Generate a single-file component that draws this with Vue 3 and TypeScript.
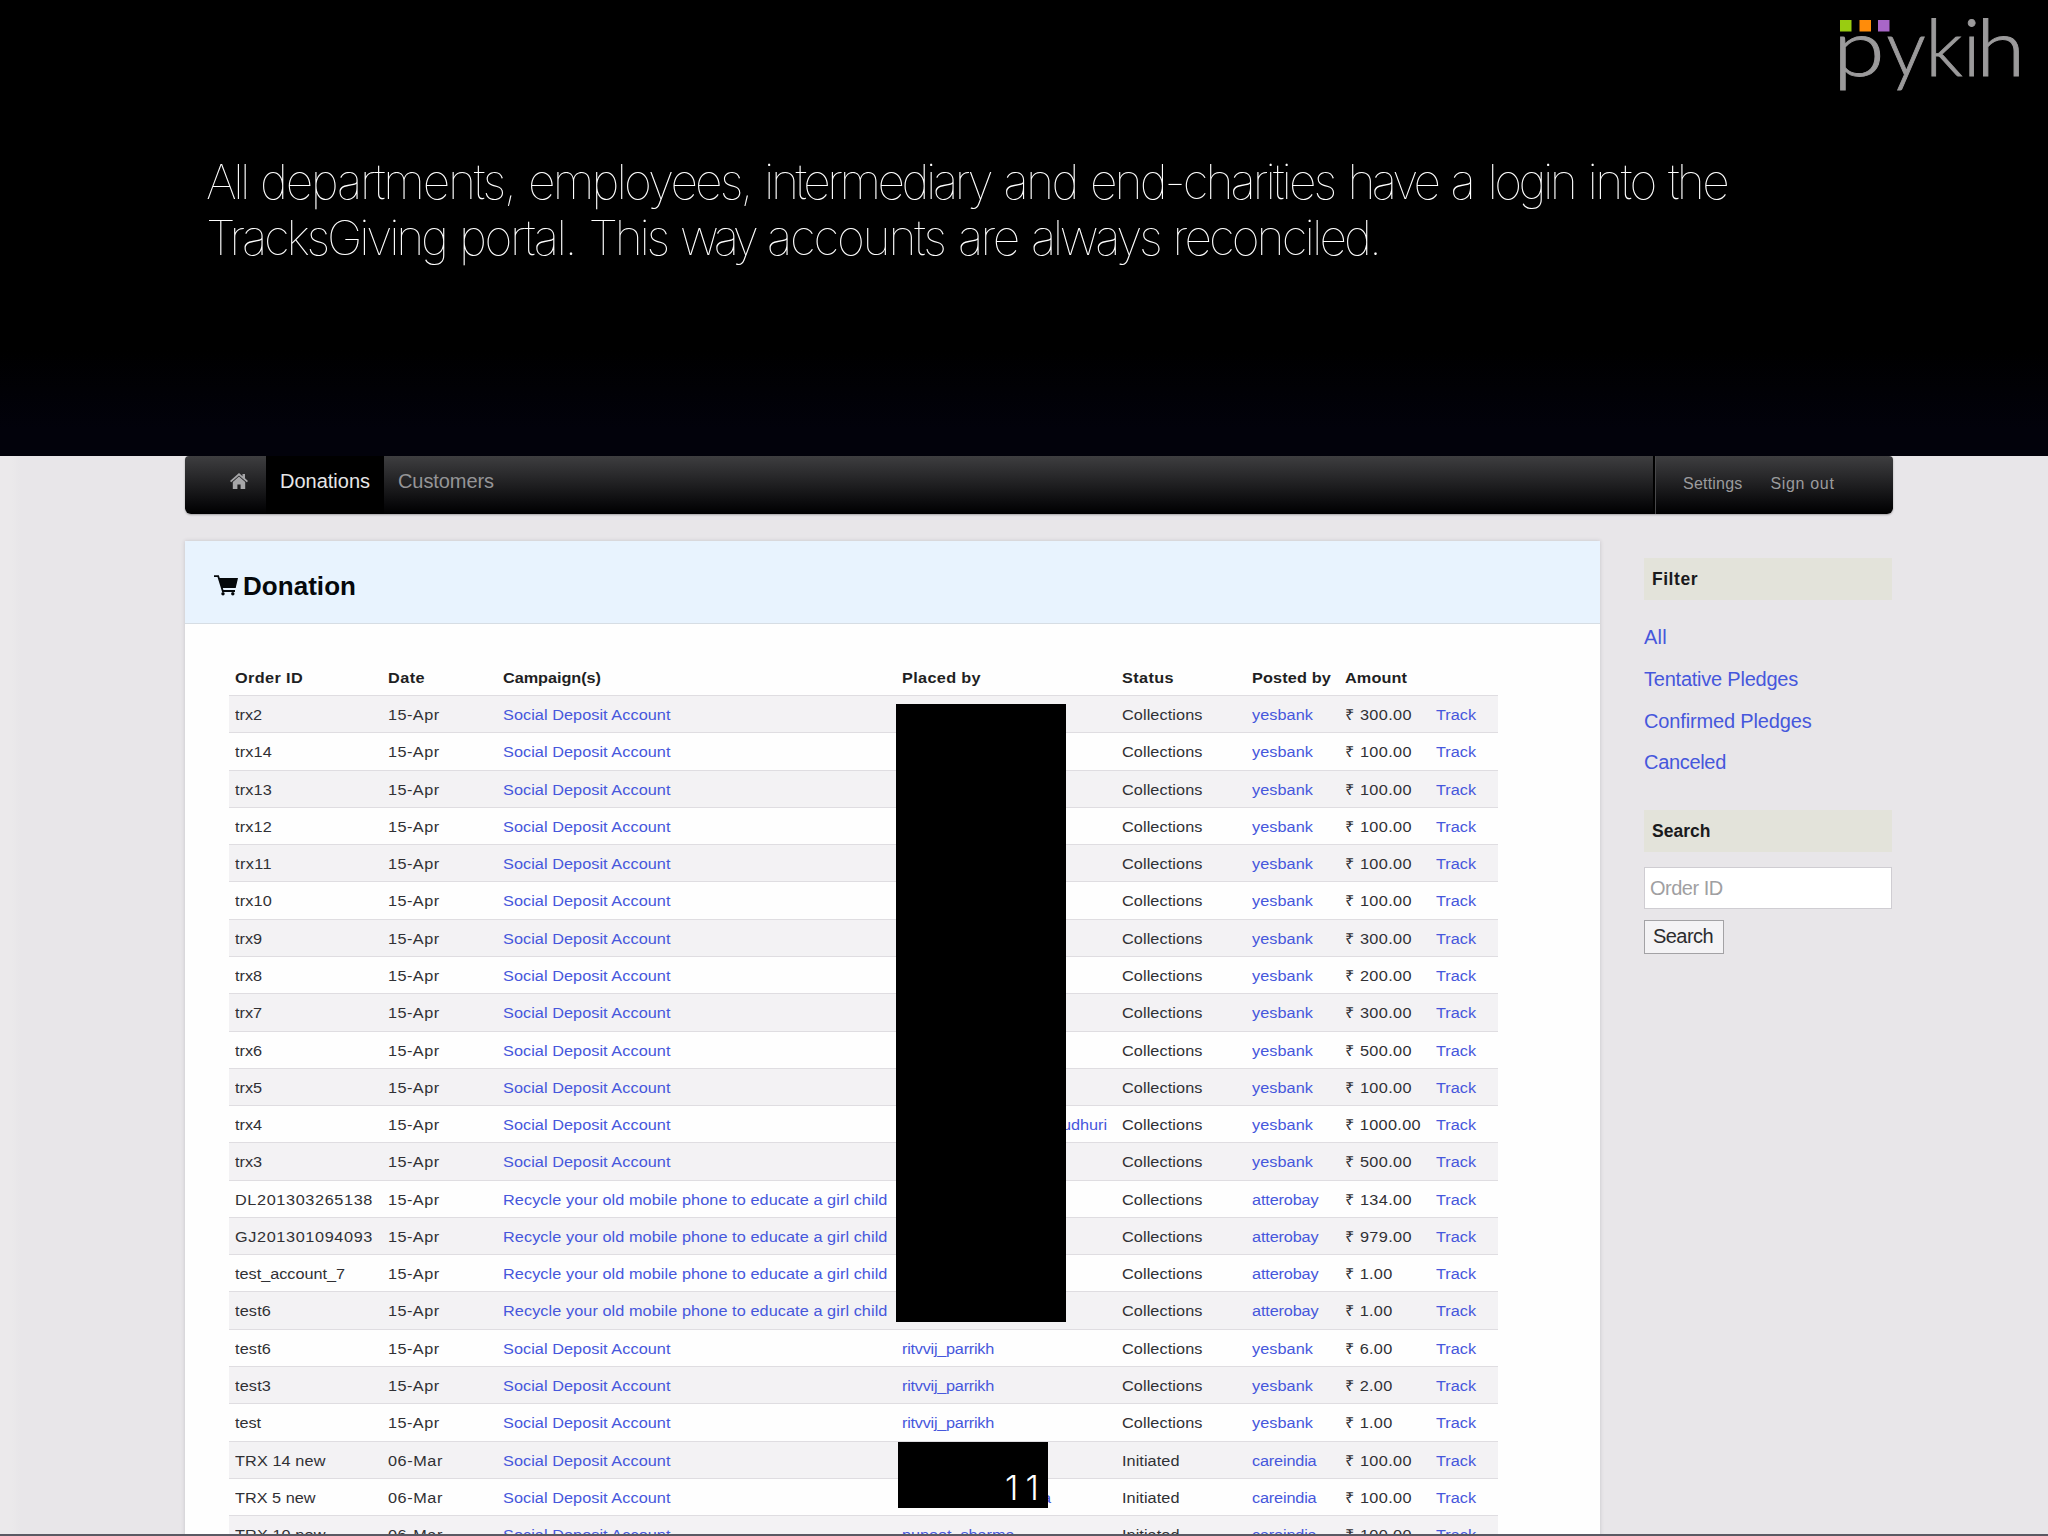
<script setup lang="ts">
import type { Directive } from 'vue'

interface Row {
  id: string
  date: string
  campaign: string
  placedBy: string
  status: string
  postedBy: string
  amount: string
}

// Adjusts tracking so that a label takes exactly the given width,
// allowing for a horizontal stretch set in CSS.
const vFit: Directive<HTMLElement, number | undefined> = {
  mounted(el, { value }) {
    const length = (el.textContent ?? '').trim().length
    if (!value || !length) return
    const natural = el.getBoundingClientRect().width
    const stretch = new DOMMatrix(getComputedStyle(el).transform).a
    el.style.letterSpacing = `${(value - natural) / length / stretch}px`
  },
}

const statement: [string, number][][] = [
  [
    ['All', 40.7], ['departments,', 254.7], ['employees,', 222.7], ['intermediary', 226.2], ['and', 73.2],
    ['end-charities', 244.2], ['have', 89.7], ['a', 23.7], ['login', 86.7], ['into', 67.2], ['the', 59],
  ],
  [
    ['TracksGiving', 239.7], ['portal.', 116.2], ['This', 78.2], ['way', 73.7], ['accounts', 177.7],
    ['are', 59.7], ['always', 128.2], ['reconciled.', 206.5],
  ],
]

const widths: Record<string, number> = {
  'Order ID': 68, Date: 37, 'Campaign(s)': 98, 'Placed by': 79, Status: 52, 'Posted by': 79, Amount: 62,
  trx2: 27, trx14: 37, trx13: 37, trx12: 37, trx11: 37, trx10: 37,
  trx9: 27, trx8: 27, trx7: 27, trx6: 27, trx5: 27, trx4: 27, trx3: 27,
  DL201303265138: 138, GJ201301094093: 138, test_account_7: 110,
  test6: 36, test3: 36, test: 26, 'TRX 14 new': 90.5, 'TRX 5 new': 80.5, 'TRX 10 new': 90.5,
  '15-Apr': 51.5, '06-Mar': 55,
  'Social Deposit Account': 167.5,
  'Recycle your old mobile phone to educate a girl child': 384.5,
  ritvvij_parrikh: 92, puneet_sharma: 112.5, udhuri: 45,
  Collections: 80.5, Initiated: 57.5, yesbank: 61, atterobay: 66.5, careindia: 64.5,
  '₹ 1000.00': 76, Track: 40,
}

function widthOf(text: string): number | undefined {
  if (widths[text]) return widths[text]
  if (text.startsWith('₹')) return text.length === 8 ? 67 : 47.5
  return undefined
}

const headers = ['Order ID', 'Date', 'Campaign(s)', 'Placed by', 'Status', 'Posted by', 'Amount']

const SDA = 'Social Deposit Account'
const RECYCLE = 'Recycle your old mobile phone to educate a girl child'

function row(
  id: string, amount: string, campaign = SDA, postedBy = 'yesbank',
  placedBy = '', date = '15-Apr', status = 'Collections',
): Row {
  return { id, date, campaign, placedBy, status, postedBy, amount: `₹ ${amount}` }
}

const rows: Row[] = [
  row('trx2', '300.00'),
  row('trx14', '100.00'),
  row('trx13', '100.00'),
  row('trx12', '100.00'),
  row('trx11', '100.00'),
  row('trx10', '100.00'),
  row('trx9', '300.00'),
  row('trx8', '200.00'),
  row('trx7', '300.00'),
  row('trx6', '500.00'),
  row('trx5', '100.00'),
  row('trx4', '1000.00', SDA, 'yesbank', 'udhuri'),
  row('trx3', '500.00'),
  row('DL201303265138', '134.00', RECYCLE, 'atterobay'),
  row('GJ201301094093', '979.00', RECYCLE, 'atterobay'),
  row('test_account_7', '1.00', RECYCLE, 'atterobay'),
  row('test6', '1.00', RECYCLE, 'atterobay'),
  row('test6', '6.00', SDA, 'yesbank', 'ritvvij_parrikh'),
  row('test3', '2.00', SDA, 'yesbank', 'ritvvij_parrikh'),
  row('test', '1.00', SDA, 'yesbank', 'ritvvij_parrikh'),
  row('TRX 14 new', '100.00', SDA, 'careindia', '', '06-Mar', 'Initiated'),
  row('TRX 5 new', '100.00', SDA, 'careindia', 'a', '06-Mar', 'Initiated'),
  row('TRX 10 new', '100.00', SDA, 'careindia', 'puneet_sharma', '06-Mar', 'Initiated'),
]

const filters = [
  { label: 'All', width: 23 },
  { label: 'Tentative Pledges', width: 154 },
  { label: 'Confirmed Pledges', width: 167.5 },
  { label: 'Canceled', width: 82 },
]
</script>

<template>
  <div class="slide">
    <header class="banner">
      <svg class="logo" width="200" height="100" viewBox="0 0 200 100">
        <g class="wordmark">
          <text transform="translate(3.100 76.300) scale(1.200 1)">p</text>
          <text x="56.500" y="76.300">y</text>
          <text x="95.500" y="76.300">k</text>
          <text x="133" y="76.300">i</text>
          <text transform="translate(146.300 76.300) scale(1.140 1)">h</text>
        </g>
        <rect x="10" y="20" width="11.500" height="11.500" fill="#99cc11" />
        <rect x="29.500" y="20" width="11.500" height="11.500" fill="#ff8c0a" />
        <rect x="48" y="20" width="11.500" height="11.500" fill="#a866c8" />
      </svg>
      <div class="statement">
        <p v-for="(line, i) in statement" :key="i">
          <span v-for="[word, w] in line" :key="word" v-fit="w">{{ word }}</span>
        </p>
      </div>
    </header>

    <main class="portal">
      <nav class="navbar">
        <a class="home">
          <svg width="18" height="16" viewBox="0 0 18 16">
            <path d="M9 0 0 8l1.200 1.300L9 2.600l7.800 6.700L18 8l-3-2.700V1h-2.500v2.200z" fill="#a6a6a8" />
            <path d="M9 3.500 2.800 9V16h4.600v-4.500h3.200V16h4.600V9z" fill="#a6a6a8" />
          </svg>
        </a>
        <a class="tab active"><span v-fit="90">Donations</span></a>
        <a class="tab"><span v-fit="96">Customers</span></a>
        <div class="account">
          <a v-fit="59.500">Settings</a>
          <a v-fit="64">Sign out</a>
        </div>
      </nav>

      <div class="columns">
        <section class="panel">
          <h1 class="panel-title">
            <svg width="24" height="21" viewBox="0 0 24 21">
              <path d="M0 1.200h4.200L8.800 16H21" fill="none" stroke="#05080b" stroke-width="1.800" />
              <path d="M4.600 3H24l-2.300 10H8z" fill="#05080b" />
              <circle cx="9" cy="18.700" r="1.700" fill="#05080b" />
              <circle cx="18.800" cy="18.700" r="1.700" fill="#05080b" />
            </svg>
            <span v-fit="113">Donation</span>
          </h1>

          <div class="orders">
            <div class="order head">
              <span v-for="h in headers" :key="h"><b v-fit="widthOf(h)">{{ h }}</b></span>
            </div>
            <div v-for="(r, i) in rows" :key="i" class="order">
              <span><i v-fit="widthOf(r.id)">{{ r.id }}</i></span>
              <span><i v-fit="widthOf(r.date)">{{ r.date }}</i></span>
              <span><a v-fit="widthOf(r.campaign)">{{ r.campaign }}</a></span>
              <span :class="{ tail: r.placedBy === 'udhuri', last: r.placedBy === 'a' }">
                <a v-fit="widthOf(r.placedBy)">{{ r.placedBy }}</a>
              </span>
              <span><i v-fit="widthOf(r.status)">{{ r.status }}</i></span>
              <span><a v-fit="widthOf(r.postedBy)">{{ r.postedBy }}</a></span>
              <span><i v-fit="widthOf(r.amount)">{{ r.amount }}</i></span>
              <span><a v-fit="widthOf('Track')">Track</a></span>
            </div>
          </div>
        </section>

        <aside class="sidebar">
          <h2><span v-fit="46">Filter</span></h2>
          <ul>
            <li v-for="f in filters" :key="f.label"><a v-fit="f.width">{{ f.label }}</a></li>
          </ul>
          <h2><span v-fit="58.500">Search</span></h2>
          <input type="text" placeholder="Order ID" />
          <button type="button"><span v-fit="60">Search</span></button>
        </aside>
      </div>
    </main>

    <div class="mask names"></div>
    <div class="mask page"><span v-fit="41">11</span></div>
    <div class="edge"></div>
  </div>
</template>

<style>
body {
  margin: 0;
}
</style>

<style scoped>
.slide {
  position: relative;
  display: flex;
  flex-direction: column;
  width: 2048px;
  height: 1536px;
  overflow: hidden;
  background: #e8e6e9;
  font-family: 'Liberation Sans', Arial, sans-serif;
  color: #303034;
}
.banner {
  position: relative;
  box-sizing: border-box;
  flex: none;
  height: 456px;
  padding: 154px 0 0 206px;
  background: linear-gradient(#000 0, #000 350px, #02020b 430px, #02020b 100%);
}
.logo {
  position: absolute;
  left: 1830px;
  top: 0;
  overflow: visible;
}
.wordmark {
  font-family: Lato, sans-serif;
  font-weight: 300;
  font-size: 78px;
  fill: #9b9a9b;
  stroke: #9b9a9b;
  stroke-width: 0.900px;
}
.statement {
  font-family: Inter, 'Helvetica Neue', sans-serif;
  font-weight: 100;
  font-size: 48px;
  line-height: 56px;
  color: #fff;
  will-change: transform;
}
.statement p {
  display: flex;
  gap: 13.300px;
  margin: 0;
}
.statement span {
  flex: none;
  white-space: nowrap;
}
.portal {
  flex: 1;
  min-height: 0;
  padding: 0 155px 0 185px;
  background: linear-gradient(90deg, #ebe9eb 0 12px, #e8e6e9 20px);
}
.navbar {
  display: flex;
  height: 58px;
  border-radius: 4px 4px 6px 6px;
  overflow: hidden;
  background: linear-gradient(#3e3e40, #252527 40%, #08080a 85%, #000);
  box-shadow: 0 1px 2px rgba(0, 0, 0, 0.3);
}
.home {
  box-sizing: border-box;
  width: 81px;
  padding: 17px 0 0 45px;
}
.tab {
  box-sizing: border-box;
  height: 58px;
  padding: 0 14px;
  font-size: 20px;
  line-height: 51px;
  color: #959597;
}
.tab.active {
  width: 118px;
  background: #000;
  color: #e6e6e8;
}
.account {
  display: flex;
  gap: 28px;
  box-sizing: border-box;
  width: 238px;
  margin-left: auto;
  padding-left: 27px;
  border-left: 1px solid #48484a;
  box-shadow: -2px 0 0 #000;
  font-size: 16px;
  line-height: 55px;
  color: #9b9b9d;
}
.tab span,
.account a,
.panel-title span,
.orders i,
.orders b,
.orders a,
.sidebar span,
.sidebar a {
  display: inline-block;
  flex: none;
  white-space: nowrap;
  font-style: normal;
}
.account a {
  height: 55px;
}
.columns {
  display: flex;
  justify-content: space-between;
  align-items: flex-start;
  padding-top: 27px;
}
.panel {
  width: 1415px;
  height: 1000px;
  background: #fefefe;
  box-shadow: 0 0 4px rgba(60, 50, 70, 0.2);
}
.panel-title {
  display: flex;
  align-items: flex-start;
  gap: 5px;
  box-sizing: border-box;
  height: 83px;
  margin: 0;
  padding: 34px 0 0 29px;
  border-bottom: 1px solid #d6dde4;
  background: #e8f3fe;
  font-size: 26px;
  line-height: 30px;
  color: #05080b;
}
.panel-title span {
  margin-top: -4px;
}
.orders {
  padding: 33.700px 0 0 44px;
}
.order {
  display: grid;
  grid-template-columns: 153px 115px 399px 220px 130px 93px 91px 62px;
  box-sizing: border-box;
  width: 1269px;
  height: 37.290px;
  padding-left: 6px;
  border-top: 1px solid #dfdde1;
  font-size: 15.200px;
  line-height: 38.500px;
}
.orders i,
.orders b,
.orders a {
  transform: scaleX(1.070);
  transform-origin: 0 50%;
}
.order:nth-child(even) {
  background: #f3f2f4;
}
.order.head {
  border-color: transparent;
  line-height: 37px;
  color: #1f1f23;
}
.order a,
.sidebar a {
  color: #4657dc;
}
.order .tail {
  padding-left: 160px;
}
.order .last {
  padding-left: 140px;
}
.sidebar {
  width: 248px;
  margin-right: 1px;
  padding-top: 17px;
}
.sidebar h2 {
  height: 42px;
  margin: 0;
  padding-left: 8px;
  background: #e3e3da;
  font-size: 17.500px;
  line-height: 43px;
  color: #1a1a1c;
}
.sidebar ul {
  margin: 0;
  padding: 16px 0 27px;
  list-style: none;
  font-size: 20px;
  line-height: 42px;
}
.sidebar li {
  height: 41.750px;
}
.sidebar input {
  display: block;
  box-sizing: border-box;
  width: 248px;
  height: 42px;
  margin: 15px 0 11px;
  padding: 0 5px;
  border: 1px solid #cfcdd2;
  background: #fff;
  font: 20px 'Liberation Sans', Arial, sans-serif;
  letter-spacing: -0.500px;
}
.sidebar input::placeholder {
  color: #a09fa2;
}
.sidebar button {
  display: block;
  box-sizing: border-box;
  width: 80px;
  height: 34px;
  padding: 0 0 3px 8px;
  border: 1px solid #a3a2a5;
  border-radius: 0;
  background: #f4f3f5;
  font: 20px/28px 'Liberation Sans', Arial, sans-serif;
  text-align: left;
  color: #2c2c2e;
}
.mask {
  position: absolute;
  background: #000;
}
.names {
  left: 896px;
  top: 704px;
  width: 170px;
  height: 618px;
}
.page {
  left: 898px;
  top: 1442px;
  width: 150px;
  height: 66px;
  font-family: Inter, sans-serif;
  font-weight: 300;
  font-size: 34px;
  line-height: 91px;
  text-align: right;
  color: #fff;
}
.page span {
  display: inline-block;
  margin-right: 2px;
}
.edge {
  position: absolute;
  left: 0;
  bottom: 0;
  width: 100%;
  height: 2px;
  background: #5a5963;
}
</style>
